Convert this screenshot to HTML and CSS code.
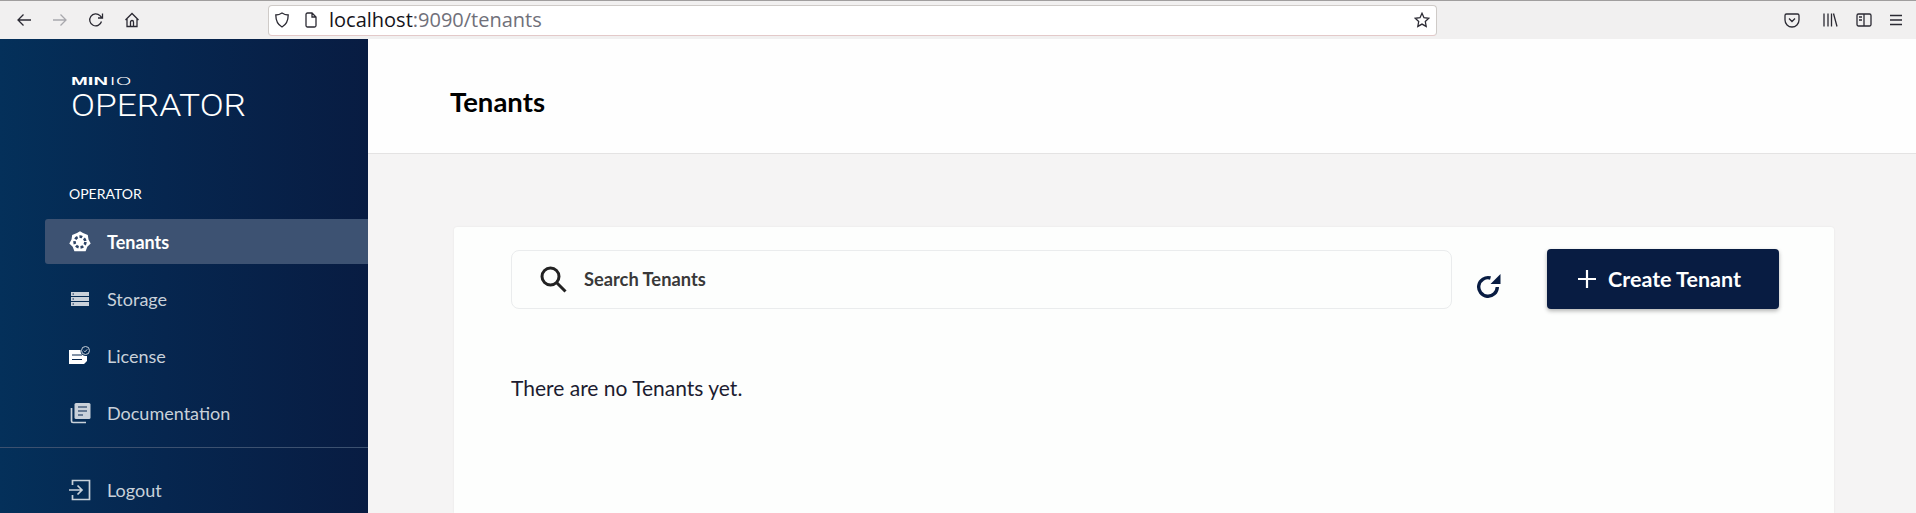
FILE: index.html
```html
<!DOCTYPE html>
<html>
<head>
    <meta charset="utf-8">
    <title>MinIO Operator - Tenants</title>
    <link rel="stylesheet" href="styles.css">
</head>
<body>
    <div class="browser-bar">
        <div class="nav-icons">
            <svg class="tb-icon" viewBox="0 0 16 16"><path d="M15 8H2M7.5 2.5 2 8l5.500 5.500"/></svg>
            <svg class="tb-icon faded" viewBox="0 0 16 16"><path d="M1 8h13M8.500 2.500 14 8l-5.500 5.500"/></svg>
            <svg class="tb-icon" viewBox="0 0 16 16"><path d="M13.500 9.500A6 6 0 1 1 12 3.600L14 6M14.500 1.500V6H10"/></svg>
            <svg class="tb-icon" viewBox="0 0 16 16"><path d="M1.500 8 8 1.500 14.500 8M3 6.800V14.500h10V6.800M6.500 14.500V10a1.500 1.500 0 0 1 3 0v4.500"/></svg>
        </div>
        <div class="address">
            <svg class="tb-icon shield" viewBox="0 0 16 16"><path d="M8 1C6 2.400 4 3 1.800 3c0 5.500 1.700 9.500 6.200 12 4.500-2.500 6.200-6.500 6.200-12C12 3 10 2.400 8 1Z"/></svg>
            <svg class="tb-icon page" viewBox="0 0 16 16"><path d="M3 2.500A1.500 1.500 0 0 1 4.500 1H9l4 4v8.500a1.500 1.500 0 0 1-1.500 1.500h-7A1.500 1.500 0 0 1 3 13.500ZM9 1v4h4"/></svg>
            <span class="url"><b>localhost</b>:9090/tenants</span>
            <svg class="tb-icon star" viewBox="0 0 16 16"><path d="m8 1.300 2 4.400 4.800.6-3.500 3.300.9 4.800L8 12.100l-4.200 2.300.9-4.800L1.200 6.300 6 5.700Z"/></svg>
        </div>
        <div class="right-icons">
            <svg class="tb-icon pocket" viewBox="0 0 16 16"><path d="M2.500 2h11A1.500 1.500 0 0 1 15 3.500V8A7 7 0 0 1 1 8V3.500A1.500 1.500 0 0 1 2.500 2ZM5 6.500l3 3 3-3"/></svg>
            <svg class="tb-icon library" viewBox="0 0 16 16"><path d="M2 1.500v13M6 1.500v13M9.500 1.500v13M11.500 1.500l3.500 13"/></svg>
            <svg class="tb-icon" viewBox="0 0 16 16"><path d="M2.500 2h11A1.500 1.500 0 0 1 15 3.500v9a1.500 1.500 0 0 1-1.500 1.500h-11A1.500 1.500 0 0 1 1 12.500v-9A1.500 1.500 0 0 1 2.500 2ZM8 2v12M3 5h3M3 8h3"/></svg>
            <svg class="tb-icon" viewBox="0 0 16 16"><path d="M2 3.500h12M2 8h12M2 12.500h12"/></svg>
        </div>
    </div>

    <div class="app">
        <aside class="sidebar">
            <svg class="logo" viewBox="0 0 200 48">
                <text class="logo-min" x="0" y="8" textLength="37" lengthAdjust="spacingAndGlyphs">MIN</text>
                <text class="logo-io" x="38.500" y="8" textLength="22" lengthAdjust="spacingAndGlyphs">IO</text>
                <text class="logo-name" x="0" y="38.500" textLength="175" lengthAdjust="spacingAndGlyphs">OPERATOR</text>
            </svg>
            <div class="section-label">OPERATOR</div>
            <a class="menu-item active">
                <svg class="menu-icon" viewBox="0 0 22 22">
                    <path class="white" d="M11 .2l3 1.800 4.800 2 .7 4.500 2.200 4-3.400 3.300-1.700 4.400H5.400l-1.700-4.400L.3 12.500l2.200-4 .7-4.500L8 2Z"/>
                    <circle class="wheel" cx="11" cy="11" r="5.400"/>
                </svg>
                <span>Tenants</span>
            </a>
            <a class="menu-item">
                <svg class="menu-icon" viewBox="0 0 22 22">
                    <path class="solid" d="M2 4h18v4H2ZM2 9h18v4H2ZM2 14h18v4H2Z"/>
                    <path class="cut" d="M3.500 6h1.500M3.500 11h1.500M3.500 16h1.500"/>
                </svg>
                <span>Storage</span>
            </a>
            <a class="menu-item">
                <svg class="menu-icon" viewBox="0 0 22 22">
                    <path class="white" d="M0 5h11.500a5.500 5.500 0 0 0 6.500 6v5l-3 3H0Z"/>
                    <path class="cut" d="M3 10h10M3 14.500h10"/>
                    <circle class="ring" cx="16.500" cy="5.500" r="4"/>
                    <path class="ring" d="m14.800 5.600 1.200 1.200 2.200-2.400"/>
                </svg>
                <span>License</span>
            </a>
            <a class="menu-item">
                <svg class="menu-icon" viewBox="0 0 22 22">
                    <path class="line" d="M2.500 6v13a1.500 1.500 0 0 0 1.500 1.500h13"/>
                    <path class="solid" d="M7 1h13a1.500 1.500 0 0 1 1.500 1.500v13A1.500 1.500 0 0 1 20 17H7a1.500 1.500 0 0 1-1.500-1.500v-13A1.500 1.500 0 0 1 7 1Z"/>
                    <path class="cut" d="M9 5h9M9 9h9M9 13h5"/>
                </svg>
                <span>Documentation</span>
            </a>
            <div class="divider"></div>
            <a class="menu-item">
                <svg class="menu-icon" viewBox="0 0 22 22">
                    <path class="line" d="M3.500 6V1.500h17v19h-17V16M0 11h12.500M8.500 6.500l4.500 4.500-4.500 4.500"/>
                </svg>
                <span>Logout</span>
            </a>
        </aside>

        <main class="main">
            <header class="page-header">
                <h1>Tenants</h1>
            </header>
            <section class="card">
                <div class="actions">
                    <div class="search">
                        <svg class="search-icon" viewBox="0 0 27 27"><circle cx="10.500" cy="10.500" r="8.500"/><path d="m16.500 16.500 9 9"/></svg>
                        <span>Search Tenants</span>
                    </div>
                    <svg class="refresh" viewBox="0 0 25 25">
                        <path class="refresh-arc" d="M21.300 14A9.300 9.300 0 1 1 14.500 5"/>
                        <path class="refresh-head" d="M24.500 1v10H14.500Z"/>
                    </svg>
                    <button class="create-btn">
                        <svg class="plus" viewBox="0 0 18 18"><path d="M9 0v18M0 9h18"/></svg>
                        Create Tenant
                    </button>
                </div>
                <p class="empty">There are no Tenants yet.</p>
            </section>
        </main>
    </div>
</body>
</html>
```

FILE: styles.css
```css
html, body {
    margin: 0;
    padding: 0;
    height: 513px;
    overflow: hidden;
}
body {
    font-family: Lato, "Open Sans", sans-serif;
    background: #f5f4f4;
}
.browser-bar {
    display: flex;
    align-items: center;
    height: 38px;
    background: #f1f0f0;
    border-top: 1px solid #a09e9e;
}
.tb-icon {
    width: 16px;
    height: 16px;
    flex: none;
    fill: none;
    stroke: #2b2a33;
    stroke-width: 1.3;
}
.tb-icon.faded {
    stroke: #a8a8ad;
}
.nav-icons {
    display: flex;
    gap: 20px;
    padding-left: 16px;
}
.address {
    display: flex;
    align-items: center;
    width: 1167px;
    height: 29px;
    margin-left: 128px;
    background: #fff;
    border: 1px solid #cfcbc8;
    border-bottom-color: #e3c9c9;
    border-radius: 4px;
}
.shield {
    margin-left: 5px;
}
.page {
    margin-left: 13px;
}
.url {
    margin-left: 10px;
    padding-bottom: 1px;
    font-family: "Open Sans", sans-serif;
    font-size: 20px;
    line-height: 26px;
    color: #70707a;
    white-space: nowrap;
}
.url b {
    font-weight: 400;
    color: #15141a;
}
.star {
    margin-left: auto;
    margin-right: 6px;
}
.right-icons {
    display: flex;
    gap: 16px;
    margin-left: auto;
    padding-right: 12px;
}
.pocket {
    margin-right: 6px;
}
.library {
    margin-right: 2px;
}

.app {
    display: flex;
    height: 474px;
}
.sidebar {
    width: 368px;
    flex: none;
    background: linear-gradient(90deg, #04305a 0%, #06264f 45%, #081c42 100%);
    color: #c9d1da;
}
.logo {
    display: block;
    width: 200px;
    height: 48px;
    padding: 38px 0 0 71px;
    fill: #fff;
}
.logo-min {
    font-family: "Liberation Sans", sans-serif;
    font-size: 11px;
    font-weight: 700;
}
.logo-io {
    font-family: Roboto, sans-serif;
    font-size: 11px;
    font-weight: 300;
}
.logo-name {
    font-family: Roboto, sans-serif;
    font-size: 30.5px;
    font-weight: 300;
}
.section-label {
    margin: 60px 0 17px 69px;
    font-size: 14px;
    line-height: 17px;
    color: #fff;
}
.menu-item {
    display: flex;
    align-items: center;
    height: 45px;
    margin: 0 0 12px 45px;
    padding-left: 24px;
    font-size: 18px;
    border-radius: 3px 0 0 3px;
}
.menu-item.active {
    background: #3d5272;
    color: #fff;
    font-weight: 700;
}
.menu-icon {
    width: 22px;
    height: 22px;
    margin-right: 16px;
    flex: none;
    fill: none;
}
.menu-icon .solid {
    fill: #c9d1da;
}
.menu-icon .white {
    fill: #fff;
}
.menu-icon .wheel {
    fill: none;
    stroke: #2f4566;
    stroke-width: 2.600;
    stroke-dasharray: 2.900 1.947;
}
.menu-icon .cut {
    stroke: #06264f;
    stroke-width: 1.2;
}
.menu-icon .line {
    stroke: #c9d1da;
    stroke-width: 1.7;
}
.menu-icon .ring {
    stroke: #c9d1da;
    stroke-width: 1;
}
.divider {
    height: 1px;
    margin: 0 0 19px;
    background: #3c5170;
}

.main {
    flex: 1;
    min-width: 0;
}
.page-header {
    display: flex;
    align-items: center;
    height: 115px;
    padding: 10px 0 0 82px;
    background: #fefefe;
    border-bottom: 1px solid #e4e3e3;
    box-sizing: border-box;
}
.page-header h1 {
    margin: 0;
    font-size: 27.5px;
    font-weight: 700;
    color: #000;
}
.card {
    width: 1380px;
    height: 286px;
    margin: 73px 0 0 86px;
    padding: 22px 55px 0 57px;
    background: #fdfefd;
    border-radius: 3px 3px 0 0;
    box-shadow: 0 0 2px rgba(0, 0, 0, 0.08);
    box-sizing: border-box;
}
.actions {
    display: flex;
    align-items: center;
}
.search {
    display: flex;
    align-items: center;
    width: 941px;
    height: 59px;
    padding-left: 28px;
    border: 1px solid #eaeced;
    border-radius: 8px;
    box-sizing: border-box;
    font-size: 18.3px;
    font-weight: 700;
    color: #393939;
}
.search-icon {
    width: 27px;
    height: 27px;
    margin-right: 17px;
    fill: none;
    stroke: #222;
    stroke-width: 3;
}
.refresh {
    width: 25px;
    height: 25px;
    margin: 13px 46px 0 24px;
    flex: none;
}
.refresh-arc {
    fill: none;
    stroke: #081c42;
    stroke-width: 3.400;
}
.refresh-head {
    fill: #081c42;
}
.create-btn {
    display: flex;
    align-items: center;
    width: 232px;
    height: 60px;
    padding: 0 0 0 31px;
    border: 0;
    border-radius: 4px;
    background: #081c42;
    color: #fff;
    font-family: inherit;
    font-size: 21.5px;
    font-weight: 700;
    box-shadow: 0 2px 4px rgba(0, 0, 0, 0.3);
}
.plus {
    width: 18px;
    height: 18px;
    margin-right: 12px;
    fill: none;
    stroke: #fff;
    stroke-width: 2.200;
}
.empty {
    margin: 66px 0 0;
    font-size: 21px;
    line-height: 26px;
    color: #1c1c30;
}
```
